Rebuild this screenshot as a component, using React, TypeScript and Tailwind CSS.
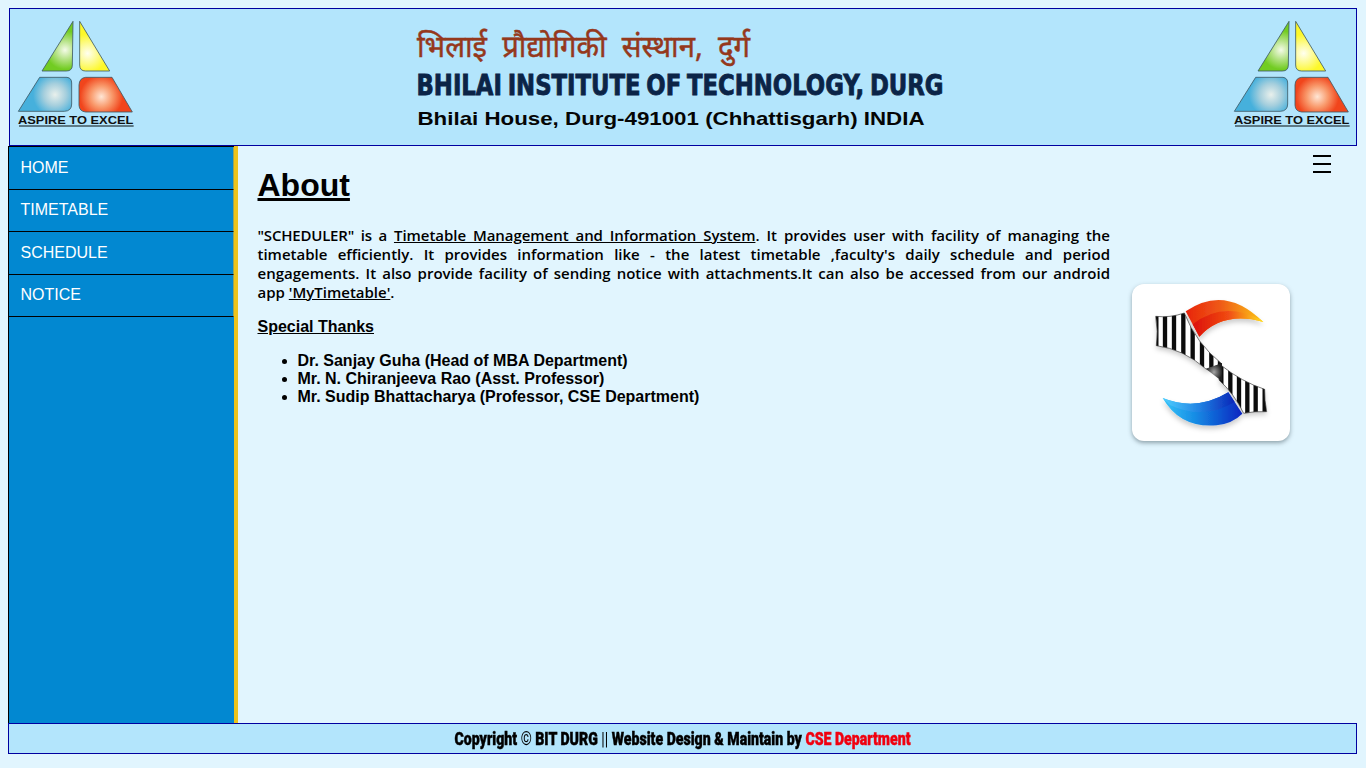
import React from "react";

function TriangleLogo({ id }: { id: string }) {
  const glow = (name: string, cx: number, cy: number, r: number, inner: string, mid: string, outer: string) => (
    <radialGradient id={`${id}-${name}`} gradientUnits="userSpaceOnUse" cx={cx} cy={cy} r={r}>
      <stop offset="0" stopColor={inner} />
      <stop offset="0.5" stopColor={mid} />
      <stop offset="1" stopColor={outer} />
    </radialGradient>
  );
  return (
    <svg className="block h-[110px] w-[118px] shrink-0" viewBox="50 60 354 330">
      <defs>
        {glow("green", 194, 150, 58, "#f4fbe8", "#b3e283", "#72cc22")}
        {glow("yellow", 262, 160, 58, "#fffff0", "#fdfb90", "#fdf82a")}
        {glow("blue", 164, 284, 66, "#e9f0ec", "#a6cfdd", "#46b0dc")}
        {glow("red", 303, 290, 64, "#ffe6d5", "#f99a6c", "#f1451c")}
      </defs>
      <g stroke="#3f5a66" strokeWidth="2.5" strokeLinejoin="round">
        <path d="M218 64 L125 213 H198 Q216 213 216 195 Z" fill={`url(#${id}-green)`} />
        <path d="M238 64 L328 213 H256 Q238 213 238 195 Z" fill={`url(#${id}-yellow)`} />
        <path d="M118 232 H200 Q214 234 214 249 V312 Q214 333 192 334 H54 Z" fill={`url(#${id}-blue)`} />
        <path d="M335 232 H256 Q237 234 236 255 V316 Q237 334 256 336 H396 Z" fill={`url(#${id}-red)`} />
      </g>
      <text x="53" y="371" textLength="346" lengthAdjust="spacingAndGlyphs" fontFamily="Liberation Sans" fontWeight="700" fontSize="31" fill="#101010">
        ASPIRE TO EXCEL
      </text>
      <path d="M56 378 H400" stroke="#41565f" strokeWidth="4" />
    </svg>
  );
}

function InstituteWordmark() {
  return (
    <svg className="block h-[120px] w-[560px] overflow-visible" viewBox="400 15 560 120">
      <text x="417" y="56.5" textLength="333" lengthAdjust="spacingAndGlyphs" fontFamily="Noto Sans, Noto Sans Devanagari, sans-serif" fontWeight="400" fontSize="31" fill="#95381c" stroke="#95381c" strokeWidth="0.5">
        भिलाई&nbsp; प्रौद्योगिकी&nbsp; संस्थान,&nbsp; दुर्ग
      </text>
      <text x="416.5" y="95" textLength="527" lengthAdjust="spacingAndGlyphs" wordSpacing="-2.5" fontFamily="DejaVu Sans Condensed, DejaVu Sans, sans-serif" fontWeight="700" fontSize="28.5" fill="#0b2447" stroke="#0b2447" strokeWidth="0.8">
        BHILAI INSTITUTE OF TECHNOLOGY, DURG
      </text>
      <text x="417.5" y="125" textLength="507" lengthAdjust="spacingAndGlyphs" fontFamily="Liberation Sans, sans-serif" fontWeight="700" fontSize="19" fill="#050505">
        Bhilai House, Durg-491001 (Chhattisgarh) INDIA
      </text>
    </svg>
  );
}

function AppTile() {
  return (
    <div className="mt-[138px] h-[157px] w-[158px] rounded-xl bg-white shadow-[0_2px_4px_rgba(60,80,90,0.5)]">
      <svg className="block h-[158px] w-[158px]" viewBox="36 42 474 474">
        <defs>
          <linearGradient id="flame" x1="0" x2="1">
            <stop offset="0" stopColor="#e8240c" />
            <stop offset="0.45" stopColor="#ef5a16" />
            <stop offset="1" stopColor="#fcc517" />
          </linearGradient>
          <linearGradient id="flameLow" x1="0" x2="1">
            <stop offset="0" stopColor="#dc1008" />
            <stop offset="0.5" stopColor="#f04a12" />
            <stop offset="1" stopColor="#ffe020" />
          </linearGradient>
          <linearGradient id="wave" x1="0" x2="1">
            <stop offset="0" stopColor="#38c4f8" />
            <stop offset="0.4" stopColor="#168de5" />
            <stop offset="1" stopColor="#0724c0" />
          </linearGradient>
          <linearGradient id="waveTop" x1="0" x2="1">
            <stop offset="0" stopColor="#50d0ff" />
            <stop offset="0.5" stopColor="#2184e4" />
            <stop offset="1" stopColor="#0a25b8" />
          </linearGradient>
          <radialGradient id="knot">
            <stop offset="0" stopColor="#a5a5a5" />
            <stop offset="1" stopColor="#202020" />
          </radialGradient>
          <clipPath id="upperBand">
            <path d="M107 139 Q150 144 193 129 Q228 220 306 282 L258 297 Q190 237 109 227 Q115 185 107 139 Z" />
          </clipPath>
          <clipPath id="lowerBand">
            <path d="M306 288 Q365 335 434 358 Q433 390 440 425 Q405 423 371 430 Q342 370 297 330 Z" />
          </clipPath>
          <filter id="soft" x="-20%" y="-20%" width="140%" height="150%">
            <feDropShadow dx="0" dy="10" stdDeviation="8" floodColor="#000" floodOpacity="0.2" />
          </filter>
        </defs>
        <g filter="url(#soft)">
          <path d="M197 124 Q315 42 430 156 Q310 122 238 200 Z" fill="url(#flame)" />
          <path d="M218 163 Q310 90 424 150 L430 156 Q310 122 238 200 Z" fill="url(#flameLow)" />
          <path d="M128 384 Q180 475 290 466 Q338 460 367 431 L325 367 Q230 425 128 384 Z" fill="url(#wave)" />
          <path d="M128 384 Q230 425 325 367 L344 396 Q250 452 150 405 Z" fill="url(#waveTop)" />
          <path d="M107 139 Q150 144 193 129 Q228 220 306 282 L258 297 Q190 237 109 227 Q115 185 107 139 Z" fill="#fff" />
          <path d="M306 288 Q365 335 434 358 Q433 390 440 425 Q405 423 371 430 Q342 370 297 330 Z" fill="#fff" />
        </g>
        <path d="M109 120V320 M135 120V320 M162 120V320 M190 120V320 M218 120V320 M246 120V320 M274 120V320 M300 120V320" stroke="#0c0c0c" strokeWidth="13" clipPath="url(#upperBand)" />
        <path d="M304 280V440 M331 280V440 M357 280V440 M382 280V440 M407 280V440 M434 280V440" stroke="#0c0c0c" strokeWidth="13" clipPath="url(#lowerBand)" />
        <g fill="none" stroke="#333" strokeWidth="2">
          <path d="M107 139 Q150 144 193 129 Q228 220 306 282 L258 297 Q190 237 109 227 Q115 185 107 139 Z" />
          <path d="M306 288 Q365 335 434 358 Q433 390 440 425 Q405 423 371 430 Q342 370 297 330 Z" />
        </g>
        <path d="M258 297 L306 279 V334 Z" fill="url(#knot)" />
      </svg>
    </div>
  );
}

const menu = [
  { label: "HOME", size: "h-[43px]" },
  { label: "TIMETABLE", size: "h-[42px] pb-[2px]" },
  { label: "SCHEDULE", size: "h-[43px]" },
  { label: "NOTICE", size: "h-[42px] pb-[2px]" },
];

const thanks = [
  "Dr. Sanjay Guha (Head of MBA Department)",
  "Mr. N. Chiranjeeva Rao (Asst. Professor)",
  "Mr. Sudip Bhattacharya (Professor, CSE Department)",
];

export default function App() {
  return (
    <div className="flex h-screen flex-col overflow-hidden bg-[#e1f5fe] pt-2 pr-[9px] pb-[14px] pl-2 font-['Liberation_Sans',sans-serif] text-black">
      <header className="ml-px flex h-[138px] shrink-0 items-start justify-between border border-[#0000a0] bg-[#b3e5fc] pr-[5px] pl-[7px]">
        <div className="pt-[11px]"><TriangleLogo id="left" /></div>
        <div className="mr-[9px] pt-[6px]"><InstituteWordmark /></div>
        <div className="pt-[11px]"><TriangleLogo id="right" /></div>
      </header>

      <div className="flex min-h-0 flex-1">
        <nav className="w-[230px] shrink-0 border-r-4 border-l border-r-[#edc31b] border-l-black bg-[#0288d1]">
          <div className="border-t border-black" />
          {menu.map((item) => (
            <a key={item.label} className={`flex items-center border-r border-b border-r-[#96a45c] border-b-black pl-[11.5px] text-[16px] text-white ${item.size}`}>
              {item.label}
            </a>
          ))}
        </nav>

        <main className="flex min-w-0 flex-1 items-start pl-[19.5px]">
          <section className="w-[852.5px] shrink-0 pt-[21px]">
            <h1 className="text-[32px] leading-[37px] font-bold underline">About</h1>
            <div className="mt-[22px] font-['Open_Sans',sans-serif] text-[15px] leading-[19px] font-semibold">
              <p className="[text-align-last:justify] whitespace-nowrap">
                <span className="tracking-[-0.2px]">"SCHEDULER" is a</span> <u className="tracking-[-0.04px]">Timetable Management and Information System</u>. It provides user with facility of managing the
              </p>
              <p className="[text-align-last:justify] whitespace-nowrap">
                timetable efficiently. It provides information like - the latest timetable ,faculty's daily schedule and period
              </p>
              <p className="[text-align-last:justify] whitespace-nowrap">
                engagements. It also provide facility of sending notice with attachments.It can also be accessed from our android
              </p>
              <p>app <u>'MyTimetable'</u>.</p>
            </div>
            <h2 className="mt-4 text-[16px] leading-[18px] font-bold underline">Special Thanks</h2>
            <ul className="mt-4 list-disc pl-10 text-[16px] leading-[18px] font-bold">
              {thanks.map((name) => <li key={name}>{name}</li>)}
            </ul>
          </section>
          <div className="ml-[22px]"><AppTile /></div>
          <svg className="mt-[9px] ml-[23px] h-[18px] w-[18px]" viewBox="0 0 18 18">
            <path d="M0 1H18M0 9H18M0 17H18" stroke="#000" strokeWidth="2" />
          </svg>
        </main>
      </div>

      <footer className="flex h-[31px] shrink-0 items-center justify-center border border-[#0000a0] bg-[#b3e5fc] text-[17.5px] leading-5 font-black whitespace-nowrap">
        <p className="scale-x-[0.807] font-['Roboto',sans-serif] [-webkit-text-stroke:0.45px]">
          Copyright <span className="font-normal [-webkit-text-stroke:0]">©</span> BIT DURG <span className="font-normal [-webkit-text-stroke:0]">||</span> Website Design &amp; Maintain by <span className="text-[#f00010]">CSE Department</span>
        </p>
      </footer>
    </div>
  );
}
